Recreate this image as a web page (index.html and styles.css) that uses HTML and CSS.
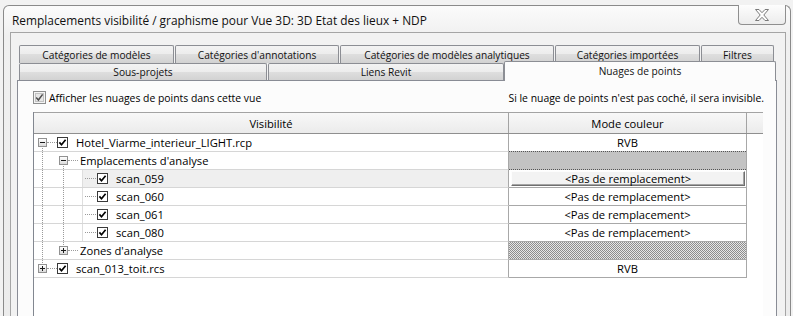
FILE: index.html
```html
<!DOCTYPE html>
<html lang="fr">
<head>
<meta charset="utf-8">
<title>Remplacements visibilité / graphisme</title>
<link rel="stylesheet" href="styles.css">
</head>
<body>
<div class="dialog">
  <div class="titlebar">
    <span class="title">Remplacements visibilité / graphisme pour Vue 3D: 3D Etat des lieux + NDP</span>
    <span class="close" role="button" aria-label="Fermer">
      <svg width="14" height="12" viewBox="0 0 14 12"><polygon points="0.5,0.5 4,0.5 7,3.7 10,0.5 13.5,0.5 8.8,6 13.5,11.5 10,11.5 7,8.3 4,11.5 0.5,11.5 5.2,6" fill="#fdfdfd" stroke="#7a7a7a" stroke-width="1"/></svg>
    </span>
  </div>
  <div class="client">
    <div class="tabrow row1">
      <div class="tab">Catégories de modèles</div>
      <div class="tab">Catégories d'annotations</div>
      <div class="tab">Catégories de modèles analytiques</div>
      <div class="tab">Catégories importées</div>
      <div class="tab">Filtres</div>
    </div>
    <div class="tabrow row2">
      <div class="tab t-sous">Sous-projets</div>
      <div class="tab t-liens">Liens Revit</div>
      <div class="tab active">Nuages de points</div>
    </div>
    <div class="panel">
      <div class="optbar">
        <label class="opt">
          <svg class="cb7" width="13" height="13" viewBox="0 0 13 13"><rect x="0.5" y="0.5" width="12" height="12" fill="#f4f4f4" stroke="#8e8f8f"/><rect x="2.5" y="2.5" width="8" height="8" fill="#e6e6e6" stroke="#c2c2c2"/><path d="M3.2 6.6 L5.4 9 L9.6 3.4" fill="none" stroke="#4d4d4d" stroke-width="1.5"/></svg>
          <span class="opt-text">Afficher les nuages de points dans cette vue</span>
        </label>
        <span class="hint">Si le nuage de points n'est pas coché, il sera invisible.</span>
      </div>
      <div class="grid">
        <div class="ghead">
          <div class="c1">Visibilité</div>
          <div class="c2">Mode couleur</div>
          <div class="cf"></div>
        </div>

        <div class="grow">
          <div class="c1">
            <span class="slot v-down h-exp"><i class="exp"></i></span>
            <svg class="ck" width="11" height="11" viewBox="0 0 11 11"><rect x="0.5" y="0.5" width="10" height="10" fill="#fff" stroke="#3a3a3a"/><path d="M2.4 5.4 L4.5 7.7 L8.6 2.8" fill="none" stroke="#000" stroke-width="1.7"/></svg>
            <span class="lbl l0">Hotel_Viarme_interieur_LIGHT.rcp</span>
          </div>
          <div class="c2">RVB</div>
        </div>

        <div class="grow">
          <div class="c1">
            <span class="slot v-full"></span>
            <span class="slot v-down h-exp"><i class="exp"></i></span>
            <span class="lbl l1">Emplacements d'analyse</span>
          </div>
          <div class="c2"><div class="focus"></div></div>
        </div>

        <div class="grow">
          <div class="c1 sel">
            <span class="slot v-full"></span>
            <span class="slot v-full"></span>
            <span class="slot leaf"></span>
            <svg class="ck" width="11" height="11" viewBox="0 0 11 11"><rect x="0.5" y="0.5" width="10" height="10" fill="#fff" stroke="#3a3a3a"/><path d="M2.4 5.4 L4.5 7.7 L8.6 2.8" fill="none" stroke="#000" stroke-width="1.7"/></svg>
            <span class="lbl l2">scan_059</span>
          </div>
          <div class="c2"><div class="btncell">&lt;Pas de remplacement&gt;</div></div>
        </div>

        <div class="grow">
          <div class="c1">
            <span class="slot v-full"></span>
            <span class="slot v-full"></span>
            <span class="slot leaf"></span>
            <svg class="ck" width="11" height="11" viewBox="0 0 11 11"><rect x="0.5" y="0.5" width="10" height="10" fill="#fff" stroke="#3a3a3a"/><path d="M2.4 5.4 L4.5 7.7 L8.6 2.8" fill="none" stroke="#000" stroke-width="1.7"/></svg>
            <span class="lbl l2">scan_060</span>
          </div>
          <div class="c2">&lt;Pas de remplacement&gt;</div>
        </div>

        <div class="grow">
          <div class="c1">
            <span class="slot v-full"></span>
            <span class="slot v-full"></span>
            <span class="slot leaf"></span>
            <svg class="ck" width="11" height="11" viewBox="0 0 11 11"><rect x="0.5" y="0.5" width="10" height="10" fill="#fff" stroke="#3a3a3a"/><path d="M2.4 5.4 L4.5 7.7 L8.6 2.8" fill="none" stroke="#000" stroke-width="1.7"/></svg>
            <span class="lbl l2">scan_061</span>
          </div>
          <div class="c2">&lt;Pas de remplacement&gt;</div>
        </div>

        <div class="grow">
          <div class="c1">
            <span class="slot v-full"></span>
            <span class="slot v-full"></span>
            <span class="slot leaf"></span>
            <svg class="ck" width="11" height="11" viewBox="0 0 11 11"><rect x="0.5" y="0.5" width="10" height="10" fill="#fff" stroke="#3a3a3a"/><path d="M2.4 5.4 L4.5 7.7 L8.6 2.8" fill="none" stroke="#000" stroke-width="1.7"/></svg>
            <span class="lbl l2">scan_080</span>
          </div>
          <div class="c2">&lt;Pas de remplacement&gt;</div>
        </div>

        <div class="grow">
          <div class="c1">
            <span class="slot v-full"></span>
            <span class="slot v-up h-exp"><i class="exp plus"></i></span>
            <span class="lbl l1">Zones d'analyse</span>
          </div>
          <div class="c2 hatch"></div>
        </div>

        <div class="grow">
          <div class="c1">
            <span class="slot v-up h-exp"><i class="exp plus"></i></span>
            <svg class="ck" width="11" height="11" viewBox="0 0 11 11"><rect x="0.5" y="0.5" width="10" height="10" fill="#fff" stroke="#3a3a3a"/><path d="M2.4 5.4 L4.5 7.7 L8.6 2.8" fill="none" stroke="#000" stroke-width="1.7"/></svg>
            <span class="lbl l0">scan_013_toit.rcs</span>
          </div>
          <div class="c2">RVB</div>
        </div>
      </div>
    </div>
  </div>
</div>
</body>
</html>
```
FILE: styles.css
```css
html, body {
  margin: 0;
  padding: 0;
}
body {
  width: 793px;
  height: 316px;
  overflow: hidden;
  background: #f2f2f2;
  font-family: "Open Sans", "Noto Sans", sans-serif;
  color: #000;
}

.dialog {
  box-sizing: border-box;
  margin: 5px 0 0 3px;
  width: 788px;
  height: 311px;
  border: 1px solid #8a8a8a;
  border-bottom: none;
  border-radius: 6px 6px 0 0;
  background: linear-gradient(#fbfbfb, #f0f0f0 30px, #ececec);
  padding: 0 4px 0 6px;
  display: flex;
  flex-direction: column;
}

.titlebar {
  height: 26px;
  display: flex;
  align-items: flex-start;
  flex: none;
}
.title {
  margin: 6px 0 0 2px;
  font-size: 11.9px;
  line-height: 16px;
  color: #111;
  white-space: nowrap;
}
.close {
  margin-left: auto;
  margin-top: -1px;
  box-sizing: border-box;
  width: 48px;
  height: 20px;
  border: 1px solid #8f8f8f;
  border-top: none;
  border-radius: 0 0 4px 4px;
  background: linear-gradient(#fdfdfd, #ececec);
  display: flex;
  align-items: center;
  justify-content: center;
  padding-top: 1px;
}

.client {
  flex: 1;
  min-height: 0;
  border: 1px solid #a5a5a5;
  border-bottom: none;
  background: #f2f2f2;
  padding: 12px 8px 0 6px;
  display: flex;
  flex-direction: column;
}

.tabrow {
  display: flex;
  padding-left: 2px;
  flex: none;
}
.row1 {
  height: 18px;
  display: grid;
  grid-template-columns: 155px 164px 214px 145px 73px;
  column-gap: 1px;
}
.row2 {
  height: 17px;
  align-items: flex-start;
  padding-right: 1px;
}
.tab {
  box-sizing: border-box;
  height: 100%;
  border: 1px solid #8c8e94;
  border-bottom: none;
  border-radius: 2px 2px 0 0;
  background: linear-gradient(#f3f3f3 0, #ececec 50%, #dedede 50%, #d2d2d2 100%);
  font-size: 10.2px;
  display: flex;
  align-items: center;
  justify-content: center;
  white-space: nowrap;
  color: #111;
}
.t-sous { width: 248px; margin-right: 1px; }
.t-liens { width: 236px; }
.tab.active {
  flex: 1;
  height: 20px;
  margin: -2px 0 -1px 0;
  background: #fcfcfc;
  z-index: 1;
  padding-bottom: 2px;
}

.panel {
  flex: 1;
  min-height: 0;
  border: 1px solid #898c95;
  border-bottom: none;
  background: #fcfcfc;
  display: flex;
  flex-direction: column;
}

.optbar {
  display: flex;
  justify-content: space-between;
  align-items: center;
  height: 13px;
  margin-top: 10px;
  padding: 0 12px 0 15px;
  font-size: 10.4px;
  flex: none;
}
.opt {
  display: flex;
  align-items: center;
}
.cb7 {
  display: block;
  margin-right: 3px;
}

.grid {
  margin: 8px 0 0 15px;
  width: 730px;
  flex: 1;
  border-left: 1px solid #828790;
  background: #fff;
  font-size: 11.2px;
  box-sizing: border-box;
}
.ghead {
  display: flex;
  box-sizing: border-box;
  height: 22px;
  border-top: 1px solid #a3a3a3;
  border-bottom: 1px solid #8f8f8f;
  background: linear-gradient(#f8f8f8, #ebebeb);
}
.ghead .c1 {
  box-sizing: border-box;
  width: 475px;
  border-right: 1px solid #a3a3a3;
  display: flex;
  align-items: center;
  justify-content: center;
}
.ghead .c2 {
  box-sizing: border-box;
  width: 238px;
  border-right: 1px solid #a3a3a3;
  display: flex;
  align-items: center;
  justify-content: center;
}
.ghead .cf {
  flex: 1;
}

.grow {
  display: flex;
  height: 18px;
}
.grow .c1 {
  box-sizing: border-box;
  width: 475px;
  border-right: 1px solid #a8a8a8;
  border-bottom: 1px solid #d6d6d6;
  display: flex;
  align-items: center;
}
.grow .c1.sel {
  background: linear-gradient(to right, transparent 48px, #efefef 48px);
}
.grow .c2 {
  box-sizing: border-box;
  width: 238px;
  border-right: 1px solid #a8a8a8;
  border-bottom: 1px solid #a8a8a8;
  display: flex;
  align-items: center;
  justify-content: center;
  white-space: nowrap;
}

.slot {
  position: relative;
  flex: none;
  width: 21px;
  align-self: stretch;
  display: flex;
  align-items: center;
}
.slot::before,
.slot::after {
  content: "";
  position: absolute;
  display: none;
}
.slot.v-full::before {
  display: block;
  left: 8px;
  top: 0;
  bottom: 0;
  border-left: 1px dotted #9a9a9a;
}
.slot.v-down::before {
  display: block;
  left: 8px;
  top: 50%;
  bottom: 0;
  border-left: 1px dotted #9a9a9a;
}
.slot.v-up::before {
  display: block;
  left: 8px;
  top: 0;
  bottom: 50%;
  border-left: 1px dotted #9a9a9a;
}
.slot.h-exp::after {
  display: block;
  left: 13px;
  right: -2px;
  top: 8px;
  border-top: 1px dotted #9a9a9a;
}
.slot.leaf::before {
  display: block;
  left: 6px;
  top: 0;
  bottom: 0;
  border-left: 1px solid #dedede;
}
.slot.leaf::after {
  display: block;
  left: 9px;
  right: 1px;
  top: 8px;
  border-top: 1px dotted #9a9a9a;
}

.exp {
  position: relative;
  z-index: 1;
  box-sizing: border-box;
  width: 9px;
  height: 9px;
  margin: 0 0 1px 4px;
  border: 1px solid #919191;
  background: linear-gradient(#ffffff, #dadada);
}
.exp::before {
  content: "";
  position: absolute;
  left: 1px;
  right: 1px;
  top: 3px;
  height: 1px;
  background: #1a1a1a;
}
.exp.plus::after {
  content: "";
  position: absolute;
  top: 1px;
  bottom: 1px;
  left: 3px;
  width: 1px;
  background: #1a1a1a;
}

.ck {
  display: block;
  flex: none;
  margin-bottom: 1px;
}
.c1 > .ck:nth-child(2) {
  margin-left: 2px;
}
.lbl {
  white-space: nowrap;
  margin-bottom: 1px;
}
.lbl.l0 { margin-left: 8px; }
.lbl.l1 { margin-left: 4px; }
.lbl.l2 { margin-left: 8px; }

.focus {
  box-sizing: border-box;
  align-self: stretch;
  width: 100%;
  margin-top: -1px;
  margin-bottom: -1px;
  background: #c3c3c3;
  border-top: 1px dotted #555;
  border-bottom: 1px dotted #555;
}
.btncell {
  box-sizing: border-box;
  align-self: stretch;
  width: 100%;
  margin: 1px 1px 1px 2px;
  background: #f3f3f3;
  border: 1px solid;
  border-color: #fdfdfd #6f6f6f #6f6f6f #fdfdfd;
  box-shadow: inset -1px -1px 0 #a5a5a5;
  display: flex;
  align-items: center;
  justify-content: center;
  padding-bottom: 1px;
}
.hatch {
  background: repeating-conic-gradient(#8d8d8d 0 25%, #e6e6e6 0 50%) 0 0 / 2px 2px;
}
```
